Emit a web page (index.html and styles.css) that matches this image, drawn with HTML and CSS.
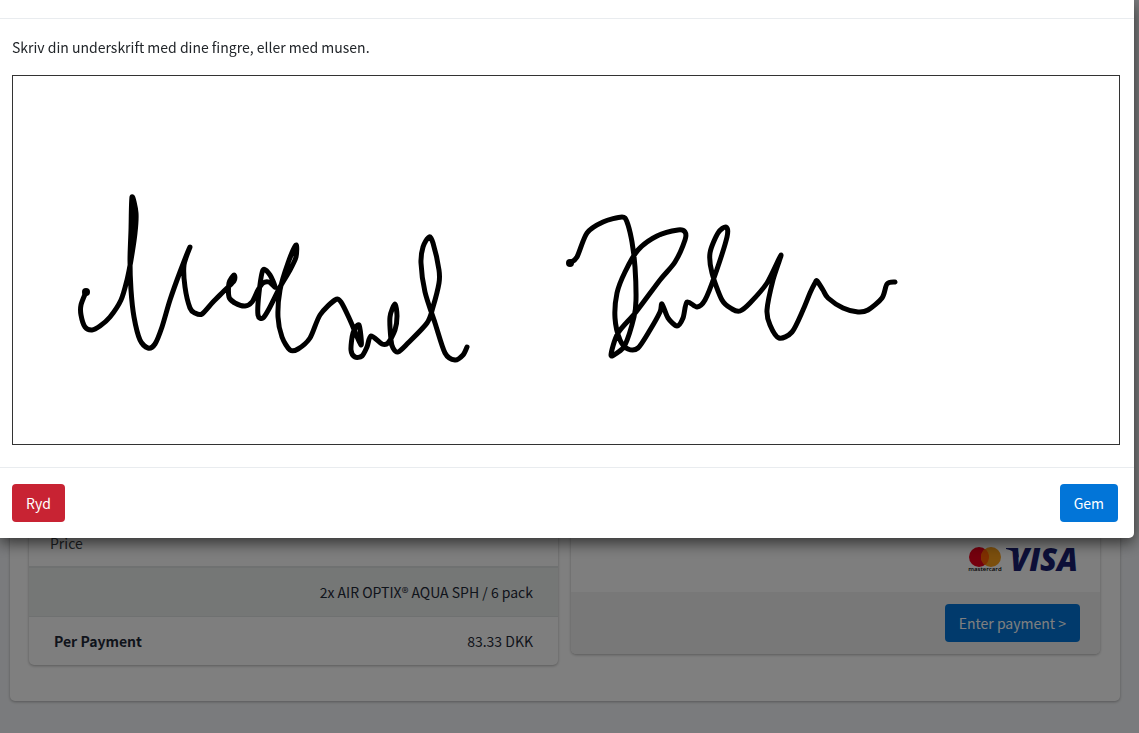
FILE: index.html
```html
<!DOCTYPE html>
<html lang="da">
<head>
    <meta charset="UTF-8">
    <meta name="viewport" content="width=device-width, initial-scale=1.0">
    <title>Underskrift</title>
    <link rel="stylesheet" href="styles.css">
</head>
<body>
    <main class="card">
        <section class="panel">
            <table class="price-table">
                <thead>
                    <tr><th colspan="2">Price</th></tr>
                </thead>
                <tbody>
                    <tr class="striped"><td></td><td class="amount">2x AIR OPTIX® AQUA SPH / 6 pack</td></tr>
                    <tr><th scope="row">Per Payment</th><td class="amount">83.33 DKK</td></tr>
                </tbody>
            </table>
        </section>
        <section class="panel">
            <div class="cards">
                <svg width="112" height="28" viewBox="0 0 112 28" role="img" aria-label="Mastercard, Visa">
                    <circle cx="11" cy="11" r="10" fill="#eb001b"/>
                    <circle cx="23" cy="11" r="10" fill="#f79e1b"/>
                    <path d="M17 3a10 10 0 0 1 0 16a10 10 0 0 1 0-16z" fill="#ff5f00"/>
                    <text class="mc-text" x="17" y="25" text-anchor="middle">mastercard</text>
                    <path d="M38 2h9c2 0 3 1 3 3l1 7C48 7 44 4 38 3z" fill="#1a1f71"/>
                    <text class="visa-text" x="42" y="25">VISA</text>
                </svg>
            </div>
            <div class="panel-footer">
                <button type="button" class="btn btn-primary">Enter payment &gt;</button>
            </div>
        </section>
    </main>

    <div class="backdrop">
        <div class="modal" role="dialog" aria-modal="true" aria-labelledby="hint">
            <div class="modal-header"></div>
            <div class="modal-body">
                <p id="hint">Skriv din underskrift med dine fingre, eller med musen.</p>
                <svg class="signature" viewBox="13 76 1106 368">
                    <circle cx="86" cy="292" r="4"/>
                    <path id="first-name"/>
                    <circle cx="570" cy="263" r="4"/>
                    <path id="last-name"/>
                </svg>
            </div>
            <div class="modal-footer">
                <button type="button" class="btn btn-danger">Ryd</button>
                <button type="button" class="btn btn-primary">Gem</button>
            </div>
        </div>
    </div>
    <script src="signature.js"></script>
</body>
</html>
```
FILE: styles.css
```css
* {
    box-sizing: border-box;
}
body {
    margin: 0;
    min-height: 100vh;
    background: #f5f7fa;
    color: #212529;
    font-family: "Noto Sans CJK JP", "Open Sans", sans-serif;
    font-size: 14px;
    line-height: 24px;
}
.card {
    display: grid;
    grid-template-columns: 1fr 1fr;
    align-items: start;
    gap: 13px;
    margin: 0 19px 0 10px;
    padding: 490px 20px 36px 19px;
    background: white;
    border-radius: 0 0 5px 5px;
    box-shadow: 0 1px 3px rgba(0, 0, 0, 0.3);
}
.panel {
    background: #fcfcfc;
    border-radius: 5px;
    box-shadow: 0 1px 3px rgba(0, 0, 0, 0.3);
    overflow: hidden;
}
.price-table {
    width: 100%;
    border-collapse: collapse;
    color: #1f2937;
}
.price-table th {
    text-align: left;
    padding: 12px 25px;
}
.price-table thead th {
    padding: 41px 21px 11px;
    font-weight: normal;
    color: #3a3f45;
    border-bottom: 2px solid #dfe3e3;
}
.price-table td {
    padding: 12px 25px;
}
.price-table .striped {
    background: #eaeeec;
    border-bottom: 1px solid #dfe3e3;
}
.amount {
    text-align: right;
}
.cards {
    display: flex;
    justify-content: flex-end;
    padding: 56px 20px 18px;
}
.cards svg {
    overflow: visible;
}
.mc-text {
    font: 600 6px "Open Sans", sans-serif;
}
.visa-text {
    font: italic 800 31px "Open Sans", sans-serif;
    fill: #1a1f71;
}
.panel-footer {
    display: flex;
    justify-content: flex-end;
    padding: 12px 20px;
    background: #f0f0f0;
}
.btn {
    height: 38px;
    padding: 0 14px;
    border: none;
    border-radius: 4px;
    color: white;
    font: inherit;
    cursor: pointer;
}
.btn-primary {
    background: #0275d8;
}
.btn-danger {
    background: #c82333;
}
.backdrop {
    position: fixed;
    inset: 0;
    background: rgba(0, 0, 0, 0.5);
}
.modal {
    margin-right: 5px;
    background: white;
    border-radius: 0 0 5px 0;
    box-shadow: 0 5px 15px rgba(0, 0, 0, 0.6);
}
.modal-header {
    height: 19px;
    border-bottom: 1px solid #e9ecef;
}
.modal-body {
    padding: 16px 14px 22px 12px;
}
.modal-body p {
    margin: 0 0 16px;
}
.signature {
    display: block;
    width: 100%;
    border: 1px solid #333;
}
.signature path {
    fill: none;
    stroke: black;
    stroke-width: 5px;
    stroke-linecap: round;
    stroke-linejoin: round;
}
.modal-footer {
    display: flex;
    justify-content: space-between;
    padding: 16px 16px 16px 12px;
    border-top: 1px solid #e9ecef;
}
```
FILE: signature.js
```js
// Pen positions, in the order they were drawn
const strokes = {
    "first-name": [
        [86,292],[81,305],[81,315],[85,327],[92,330],[100,326],[110,317],[121,300],[127,280],[131,260],
        [135,233],[136,213],[132,197],[131,230],[130,260],[131,290],[134,317],[140,340],[148,348],[155,344],
        [162,327],[170,300],[180,272],[190,247],[184,265],[185,287],[190,308],[195,313],[202,314],[213,302],
        [223,292],[234,281],[234,275],[229,283],[229,297],[235,303],[245,306],[252,302],[258,290],[263,283],
        [269,282],[275,287],[270,275],[263,270],[259,293],[258,315],[263,318],[270,307],[280,287],[290,270],
        [296,257],[296,245],[288,263],[280,290],[278,317],[282,337],[290,350],[298,349],[310,338],[320,315],
        [335,300],[341,302],[350,320],[361,345],[359,325],[353,333],[351,350],[355,357],[362,356],[367,347],
        [371,336],[382,344],[388,343],[395,330],[397,316],[395,304],[390,317],[391,340],[393,348],[398,352],
        [408,343],[427,323],[433,307],[439,283],[439,270],[433,243],[429,237],[423,247],[421,263],[425,292],
        [435,323],[445,353],[455,360],[463,355],[467,347]
    ],
    "last-name": [
        [570,263],[577,257],[587,233],[603,222],[622,217],[627,222],[632,242],[635,267],[636,300],[634,317],
        [625,345],[617,353],[611,355],[618,333],[636,312],[660,280],[675,262],[685,240],[685,232],[678,230],
        [657,236],[638,250],[625,272],[617,293],[615,318],[620,340],[628,349],[638,348],[650,330],[660,312],
        [662,304],[668,318],[677,326],[683,318],[687,302],[697,307],[705,300],[715,275],[727,237],[726,227],
        [718,233],[710,253],[712,273],[722,300],[732,309],[740,311],[750,303],[767,283],[781,255],[773,280],
        [767,310],[770,325],[779,338],[792,332],[803,310],[810,293],[815,283],[817,281],[823,290],[828,298],
        [843,308],[858,312],[868,310],[882,298],[887,284],[895,282]
    ]
};

// Smooth curve through all points
function toPath(pts) {
    let d = "M" + pts[0];
    for (let i = 0; i < pts.length - 1; i++) {
        const a = pts[i - 1] || pts[i];
        const b = pts[i];
        const c = pts[i + 1];
        const e = pts[i + 2] || c;
        d += ` C${b[0] + (c[0] - a[0]) / 7},${b[1] + (c[1] - a[1]) / 7}`;
        d += ` ${c[0] - (e[0] - b[0]) / 7},${c[1] - (e[1] - b[1]) / 7} ${c}`;
    }
    return d;
}

for (const id in strokes) {
    document.getElementById(id).setAttribute("d", toPath(strokes[id]));
}
```
